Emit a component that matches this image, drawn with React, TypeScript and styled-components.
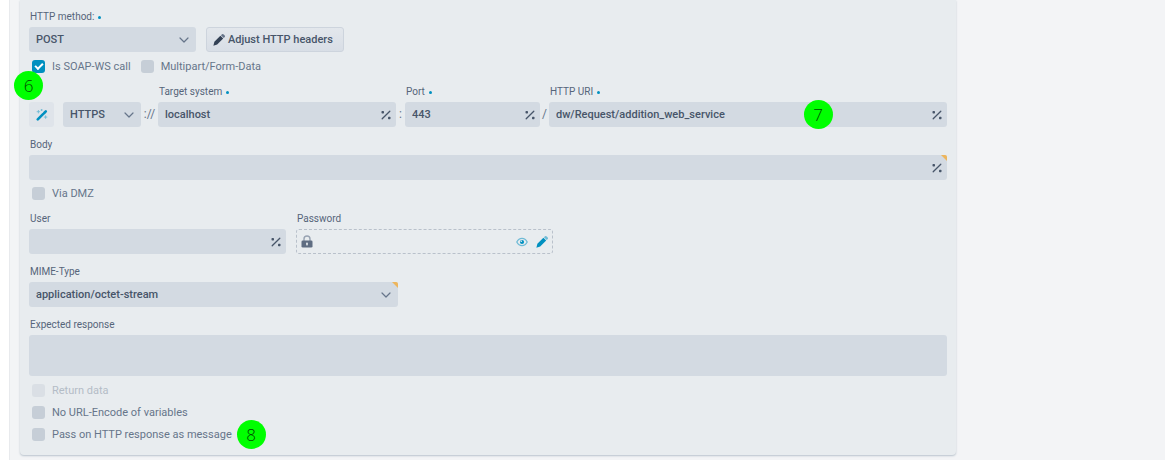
import React, { useId } from "react";
import styled, { createGlobalStyle } from "styled-components";

const GlobalStyle = createGlobalStyle`
  *, *::before, *::after { box-sizing: border-box; }
  html, body, #root { margin: 0; min-height: 100vh; }
  body {
    background: #fff;
    color: #66758a;
    font-family: Roboto, "Liberation Sans", sans-serif;
    font-size: 11px;
  }
  input, select, textarea, button { font: inherit; color: inherit; margin: 0; }
`;

const Page = styled.main`
  min-height: 100vh;
  margin-left: 9px;
  padding: 0 209px 5px 10px;
  background: #f3f4f6;
  border-left: 1px solid #e8eaed;
`;

const Card = styled.form`
  padding: 9px 9px 10px;
  background: #e8ecef;
  border-radius: 0 0 4px 4px;
  box-shadow: 0 1px 2px #b9c3cd;
`;

const Row = styled.div`
  display: flex;
  align-items: flex-end;
  gap: 10px;
  margin-bottom: 10px;
`;

const UrlRow = styled.div`
  display: grid;
  grid-template-columns: 25px 9px 78px 17px 238fr 9px 135fr 9px 398fr;
  align-items: end;
  margin-bottom: 10px;
`;

const Block = styled.div<{ $width?: number }>`
  display: flex;
  flex-direction: column;
  gap: 2px;
  min-width: 0;
  flex: ${(p) => (p.$width ? `0 1 ${p.$width}px` : "1 1 auto")};
`;

const Label = styled.label`
  display: flex;
  align-items: center;
  gap: 4px;
  height: 16px;
  padding-left: 1px;
  color: #56657a;
  font-size: 10px;
  line-height: 16px;
  white-space: nowrap;
`;

const Required = styled.span`
  width: 3px;
  height: 3px;
  border-radius: 50%;
  background: #0090c0;
`;

const Control = styled.div<{ $marked?: boolean; $dashed?: boolean }>`
  position: relative;
  display: flex;
  align-items: center;
  height: 25px;
  border-radius: 3px;
  color: #475569;
  background: ${(p) => (p.$dashed ? "transparent" : "#d3dae2")};
  border: ${(p) => (p.$dashed ? "1px dashed #b9c1cb" : "0")};
  &::after {
    content: "";
    display: ${(p) => (p.$marked ? "block" : "none")};
    position: absolute;
    top: 0;
    right: 0;
    border-top: 6px solid #edb55c;
    border-left: 6px solid transparent;
    border-top-right-radius: 2px;
  }
`;

const TextInput = styled.input`
  flex: 1;
  width: 0;
  height: 100%;
  padding: 0 7px;
  border: 0;
  background: none;
  font-weight: 500;
  outline-color: #0090c0;
`;

const SelectInput = styled.select`
  appearance: none;
  width: 100%;
  height: 100%;
  padding: 0 24px 0 7px;
  border: 0;
  background: none;
  font-weight: 500;
`;

const TextArea = styled.textarea`
  display: block;
  width: 100%;
  height: 41px;
  padding: 6px 7px;
  border: 0;
  border-radius: 3px;
  background: #d3dae2;
  resize: none;
`;

const Chevron = styled.svg`
  position: absolute;
  right: 7px;
  width: 10px;
  height: 10px;
  color: #66758a;
  pointer-events: none;
`;

const IconButton = styled.button`
  display: flex;
  flex: none;
  align-items: center;
  justify-content: center;
  width: 20px;
  height: 23px;
  padding: 0;
  border: 0;
  background: none;
`;

const WandButton = styled(IconButton)`
  width: 25px;
  height: 25px;
  border-radius: 3px;
  background: #dfe4ea;
`;

const HeadersButton = styled.button`
  display: flex;
  align-items: center;
  gap: 3px;
  height: 25px;
  padding: 0 10px 0 6px;
  border: 1px solid #cdd4dd;
  border-radius: 3px;
  background: linear-gradient(#e3e7ec, #d8dee6);
  color: #475569;
  font-weight: 500;
  white-space: nowrap;
`;

const Separator = styled.span`
  height: 25px;
  line-height: 25px;
  font-size: 12px;
  text-align: center;
`;

const CheckRow = styled.div<{ $dense?: boolean }>`
  position: relative;
  display: flex;
  align-items: center;
  gap: 10px;
  height: ${(p) => (p.$dense ? 22 : 31)}px;
  padding-left: 3px;
  padding-bottom: ${(p) => (p.$dense ? 0 : 4)}px;
`;

const FirstCheckRow = styled(CheckRow)`
  margin-top: -9px;
`;

const CheckList = styled.div`
  padding-top: 3px;
`;

const CheckLabel = styled.label<{ $muted?: boolean }>`
  display: flex;
  align-items: center;
  gap: 7px;
  white-space: nowrap;
  opacity: ${(p) => (p.$muted ? 0.4 : 1)};
`;

const CheckBox = styled.input`
  appearance: none;
  display: grid;
  place-items: center;
  width: 13px;
  height: 13px;
  border-radius: 3px;
  background: #c6ced7;
  &:checked { background: #0090c0; }
  &:checked::before {
    content: "";
    width: 8px;
    height: 5px;
    margin-bottom: 2px;
    border-left: 2px solid #fff;
    border-bottom: 2px solid #fff;
    transform: rotate(-45deg);
  }
`;

const Badge = styled.span`
  display: flex;
  align-items: center;
  justify-content: center;
  width: 29px;
  height: 29px;
  border-radius: 50%;
  background: #00ff00;
  color: #004600;
  font-family: "Open Sans", sans-serif;
  font-weight: 300;
  font-size: 17px;
  line-height: 29px;
`;

const StepBadge = styled(Badge)`
  position: absolute;
  left: -15px;
  top: 18px;
  z-index: 1;
`;

const FieldBadge = styled(Badge)`
  position: absolute;
  left: 64%;
  top: -2px;
`;

const EndBadge = styled(Badge)`
  margin-left: -5px;
`;

const PercentIcon = () => (
  <svg width="10" height="10" viewBox="0 0 10 10" aria-hidden="true">
    <path d="M1.2 8.8 8.8 1.2" stroke="currentColor" strokeWidth="1.3" strokeLinecap="round" />
    <rect x="0.5" y="1" width="2.5" height="2.5" rx="0.7" fill="currentColor" />
    <rect x="7" y="6.8" width="2.5" height="2.5" rx="0.7" fill="currentColor" />
  </svg>
);

const PencilIcon = ({ body, end }: { body: string; end: string }) => (
  <svg width="12" height="12" viewBox="0 0 12 12" aria-hidden="true">
    <path d="M7.9 1.3 8.7.5a1.4 1.4 0 0 1 2 0l.8.8a1.4 1.4 0 0 1 0 2l-.8.8Z" fill={end} />
    <path d="M7.4 1.8 10.2 4.6 4.2 10.6.4 11.7 1.4 7.8Z" fill={body} />
  </svg>
);

const WandIcon = () => (
  <svg width="12" height="12" viewBox="0 0 12 12" aria-hidden="true">
    <path d="M1.8 10.4 7 5.2" stroke="#0090c0" strokeWidth="2.6" strokeLinecap="round" />
    <path d="m8.2 4 1.6-1.6" stroke="#0090c0" strokeWidth="2.6" strokeLinecap="round" />
    <path d="M2.4 1v3.4M.7 2.7h3.4M5.6 0v2M4.6 1h2M9.6 6.4v3.4M7.9 8.1h3.4" stroke="#6fbbd6" strokeWidth=".9" />
  </svg>
);

const EyeIcon = () => (
  <svg width="12" height="10" viewBox="0 0 12 10" aria-hidden="true">
    <path d="M.8 5C3.3.2 8.7.2 11.2 5 8.7 9.8 3.3 9.8.8 5Z" fill="none" stroke="#6fbbd6" strokeWidth="1.3" />
    <circle cx="6" cy="5" r="2.1" fill="#0090c0" />
    <circle cx="5.3" cy="4.3" r=".8" fill="#e8ecef" />
  </svg>
);

const LockIcon = styled.svg`
  flex: none;
  margin-left: 4px;
`;

function PercentButton() {
  return (
    <IconButton type="button" aria-label="Insert variable">
      <PercentIcon />
    </IconButton>
  );
}

type FieldProps = {
  label: string;
  required?: boolean;
  width?: number;
  value?: string;
  marked?: boolean;
  children?: React.ReactNode;
};

function TextField({ label, required, width, value = "", marked, children }: FieldProps) {
  const id = useId();
  return (
    <Block $width={width}>
      <Label htmlFor={id}>{label}{required && <Required />}</Label>
      <Control $marked={marked}>
        <TextInput id={id} defaultValue={value} />
        <PercentButton />
        {children}
      </Control>
    </Block>
  );
}

function Select({ id, value, marked, name }: { id?: string; value: string; marked?: boolean; name?: string }) {
  return (
    <Control $marked={marked}>
      <SelectInput id={id} aria-label={name} defaultValue={value}>
        <option>{value}</option>
      </SelectInput>
      <Chevron viewBox="0 0 10 10">
        <path d="m1 3 4 4 4-4" fill="none" stroke="currentColor" strokeWidth="1.2" strokeLinecap="round" strokeLinejoin="round" />
      </Chevron>
    </Control>
  );
}

function SelectField({ label, required, width, value = "", marked }: FieldProps) {
  const id = useId();
  return (
    <Block $width={width}>
      <Label htmlFor={id}>{label}{required && <Required />}</Label>
      <Select id={id} value={value} marked={marked} />
    </Block>
  );
}

function Check({ label, checked, muted }: { label: string; checked?: boolean; muted?: boolean }) {
  return (
    <CheckLabel $muted={muted}>
      <CheckBox type="checkbox" defaultChecked={checked} disabled={muted} />
      {label}
    </CheckLabel>
  );
}

export default function App() {
  return (
    <>
      <GlobalStyle />
      <Page>
        <Card>
          <Row>
            <SelectField label="HTTP method:" required width={167} value="POST" />
            <HeadersButton type="button">
              <PencilIcon body="#334155" end="#66758a" />
              Adjust HTTP headers
            </HeadersButton>
          </Row>
          <FirstCheckRow>
            <Check label="Is SOAP-WS call" checked />
            <Check label="Multipart/Form-Data" />
            <StepBadge>6</StepBadge>
          </FirstCheckRow>
          <UrlRow>
            <WandButton type="button" aria-label="URL assistant"><WandIcon /></WandButton>
            <span />
            <Select name="Protocol" value="HTTPS" />
            <Separator>://</Separator>
            <TextField label="Target system" required value="localhost" />
            <Separator>:</Separator>
            <TextField label="Port" required value="443" />
            <Separator>/</Separator>
            <TextField label="HTTP URI" required value="dw/Request/addition_web_service">
              <FieldBadge>7</FieldBadge>
            </TextField>
          </UrlRow>
          <TextField label="Body" marked />
          <CheckRow>
            <Check label="Via DMZ" />
          </CheckRow>
          <Row>
            <TextField label="User" width={257} />
            <Block $width={257}>
              <Label htmlFor="password">Password</Label>
              <Control $dashed>
                <LockIcon width="12" height="13" viewBox="0 0 12 13" aria-hidden="true">
                  <path d="M3 6V4a3 3 0 0 1 6 0v2" fill="none" stroke="#98a3b2" strokeWidth="1.4" />
                  <rect x=".5" y="5.5" width="11" height="7" rx="1.3" fill="#5f6d82" />
                  <rect x="5.2" y="7.6" width="1.6" height="2.8" rx=".6" fill="#e8ecef" />
                </LockIcon>
                <TextInput id="password" type="password" />
                <IconButton type="button" aria-label="Show password"><EyeIcon /></IconButton>
                <IconButton type="button" aria-label="Edit password">
                  <PencilIcon body="#0090c0" end="#6fbbd6" />
                </IconButton>
              </Control>
            </Block>
          </Row>
          <Row>
            <SelectField label="MIME-Type" width={369} value="application/octet-stream" marked />
          </Row>
          <Block>
            <Label htmlFor="expected">Expected response</Label>
            <TextArea id="expected" />
          </Block>
          <CheckList>
            <CheckRow $dense><Check label="Return data" muted /></CheckRow>
            <CheckRow $dense><Check label="No URL-Encode of variables" /></CheckRow>
            <CheckRow $dense>
              <Check label="Pass on HTTP response as message" />
              <EndBadge>8</EndBadge>
            </CheckRow>
          </CheckList>
        </Card>
      </Page>
    </>
  );
}
